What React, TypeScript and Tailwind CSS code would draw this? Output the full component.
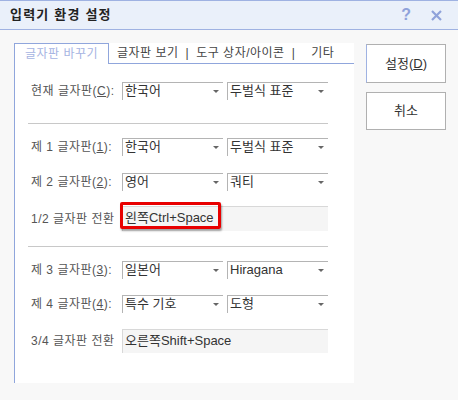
import React from "react";

const font = { fontFamily: '"Liberation Sans", "Noto Sans CJK KR", sans-serif' };

function Combo({ value }: { value: string }) {
  return (
    <div className="relative flex h-[18px] w-[101px] items-start border-l border-t border-[#b4b4b4] bg-white pl-[2px] text-[13px] leading-[16px] text-[#333]">
      <span>{value}</span>
      <span className="absolute right-[4px] top-[7px] h-0 w-0 border-x-[3px] border-t-[3px] border-x-transparent border-t-[#666]" />
    </div>
  );
}

function ComboRow({ label, hot, rest, a, b }: { label: string; hot: string; rest: string; a: string; b: string }) {
  return (
    <div className="flex h-[18px] items-center">
      <div className="w-[94px] pl-[3px] text-[12px] tracking-[0.5px] text-[#555]">
        {label}(<span className="underline">{hot}</span>){rest}
      </div>
      <Combo value={a} />
      <div className="w-[4px]" />
      <Combo value={b} />
    </div>
  );
}

function Field({ label, value, h, mark }: { label: string; value: string; h: string; mark?: boolean }) {
  return (
    <div className={`flex items-center ${h}`}>
      <div className="w-[94px] pl-[3px] text-[12px] tracking-[0.5px] text-[#555]">{label}</div>
      <div className="relative h-full w-[206px] border-l border-t border-[#d8d8d8] bg-[#f5f5f5] pl-[2px] pt-[2px] text-[13px] leading-[18px] text-[#333]">
        {value}
        {mark && (
          <div className="absolute left-[-3px] top-[-5px] h-[27px] w-[101px] rounded-[2px] border-[3px] border-[#e80000] shadow-[1px_2px_2px_rgba(0,0,0,0.35)]" />
        )}
      </div>
    </div>
  );
}

export default function App() {
  return (
    <div className="relative h-[400px] w-[458px] overflow-hidden bg-[#f8f8f8]" style={font}>
      {/* title bar */}
      <div className="flex h-[30px] items-center border-b border-t border-[#9fb2e2] bg-[#eaf0fa] pl-[10px] pr-[16px]">
        <div className="text-[13px] font-bold tracking-[1.2px] text-[#222]">입력기 환경 설정</div>
        <div className="flex-1" />
        <div className="text-[16px] font-bold text-[#8fa2da]">?</div>
        <svg width="11" height="11" viewBox="0 0 11 11" className="ml-[20px]">
          <path d="M1 1 L10 10 M10 1 L1 10" stroke="#8fa2da" strokeWidth="2.2" />
        </svg>
      </div>

      <div className="flex pl-[14px] pt-[13px]">
        {/* panel */}
        <div className="flex h-[340px] w-[340px] flex-col bg-white">
          <div className="flex h-[21px] text-[12px] tracking-[0.5px]">
            <div className="flex w-[95px] items-center justify-center border-l border-r border-t border-[#90a6dc] text-[#a6b4e2]">
              글자판 바꾸기
            </div>
            <div className="flex flex-1 items-center border-b border-[#90a6dc] pl-[8px] text-[#444]">
              <span>글자판 보기</span>
              <span className="px-[7px]">|</span>
              <span>도구 상자/아이콘</span>
              <span className="pl-[7px] pr-[16px]">|</span>
              <span>기타</span>
            </div>
          </div>
          <div className="flex flex-1 flex-col border-l border-[#90a6dc] pl-[13px] pt-[18px]">
            <div className="w-[300px]">
              <ComboRow label="현재 글자판" hot="C" rest=":" a="한국어" b="두벌식 표준" />
              <div className="mt-[23px] h-px bg-[#c8c8c8]" />
              <div className="mt-[14px]">
                <ComboRow label="제 1 글자판" hot="1" rest=":" a="한국어" b="두벌식 표준" />
              </div>
              <div className="mt-[17px]">
                <ComboRow label="제 2 글자판" hot="2" rest=":" a="영어" b="쿼티" />
              </div>
              <div className="mt-[15px]">
                <Field label="1/2 글자판 전환" value="왼쪽Ctrl+Space" h="h-[25px]" mark />
              </div>
              <div className="mt-[15px] h-px bg-[#c8c8c8]" />
              <div className="mt-[14px]">
                <ComboRow label="제 3 글자판" hot="3" rest=":" a="일본어" b="Hiragana" />
              </div>
              <div className="mt-[16px]">
                <ComboRow label="제 4 글자판" hot="4" rest=":" a="특수 기호" b="도형" />
              </div>
              <div className="mt-[16px]">
                <Field label="3/4 글자판 전환" value="오른쪽Shift+Space" h="h-[24px]" />
              </div>
            </div>
          </div>
        </div>

        {/* buttons */}
        <div className="ml-[12px] flex flex-col pt-[1px]">
          <button className="h-[39px] w-[80px] border border-[#b0b0b0] border-l-[#9fb2e2] bg-white text-[13px] text-[#333]">
            설정(<span className="underline">D</span>)
          </button>
          <button className="mt-[9px] h-[38px] w-[80px] border border-[#b0b0b0] bg-white text-[13px] text-[#333]">
            취소
          </button>
        </div>
      </div>
    </div>
  );
}
